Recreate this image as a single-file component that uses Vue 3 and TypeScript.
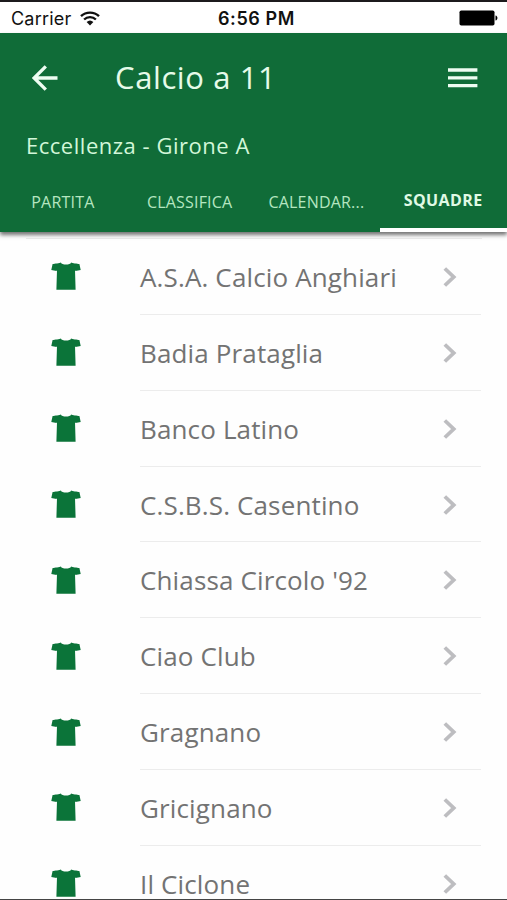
<script setup lang="ts">
interface Tab {
  label: string
  active: boolean
}

const tabs: Tab[] = [
  { label: 'PARTITA', active: false },
  { label: 'CLASSIFICA', active: false },
  { label: 'CALENDAR...', active: false },
  { label: 'SQUADRE', active: true },
]

const teams: string[] = [
  'A.S.A. Calcio Anghiari',
  'Badia Prataglia',
  'Banco Latino',
  'C.S.B.S. Casentino',
  "Chiassa Circolo '92",
  'Ciao Club',
  'Gragnano',
  'Gricignano',
  'Il Ciclone',
]
</script>

<template>
  <div class="screen">
    <div class="status">
      <div class="carrier">
        <span>Carrier</span>
        <svg class="wifi" viewBox="0 0 20 15" width="20" height="15">
          <path d="M1 5.2a13 13 0 0 1 18 0" />
          <path d="M4.1 8.5a8.6 8.6 0 0 1 11.8 0" />
          <path class="dot" d="M6.6 11.1a5 5 0 0 1 6.8 0L10 14.6z" />
        </svg>
      </div>
      <span class="time">6:56 PM</span>
      <svg class="battery" viewBox="0 0 39 16" width="39" height="16">
        <rect x="0.5" y="0.5" width="35" height="15" rx="1.8" />
        <path d="M36.5 5.5c2.6.6 2.6 4.4 0 5z" />
      </svg>
    </div>

    <header class="header">
      <div class="toolbar">
        <svg class="back" viewBox="0 0 26 26" width="26" height="26">
          <path d="M25.5 13H2M13.8 1.3L2.1 13l11.7 11.7" />
        </svg>
        <h1 class="title">Calcio a 11</h1>
        <svg class="menu" viewBox="0 0 30 20" width="30" height="20">
          <path d="M0 2h29.4M0 9.8h29.4M0 17.6h29.4" />
        </svg>
      </div>
      <div class="subtitle">Eccellenza - Girone A</div>
      <nav class="tabs">
        <div v-for="tab in tabs" :key="tab.label" class="tab" :class="{ active: tab.active }">
          <span>{{ tab.label }}</span>
        </div>
      </nav>
    </header>

    <ul class="list">
      <li v-for="team in teams" :key="team" class="row">
        <svg class="shirt" viewBox="0 0 30 28" width="30" height="28">
          <path d="M9.9.4c.6 2.7 9.6 2.7 10.2 0 1.200 1 6.100.8 8.300 1.700L29.700 7.900l-5.300 1-.4-1 .6 19.900H5.400l.6-19.900-.4 1-5.300-1L1.600 2.100C3.800 1.200 8.700 1.400 9.900.4z" />
        </svg>
        <div class="content">
          <span class="name">{{ team }}</span>
          <svg class="chevron" viewBox="0 0 14 20" width="14" height="20">
            <path d="M1.800 1.500l8.900 8.500-8.900 8.500" />
          </svg>
        </div>
      </li>
    </ul>
  </div>
</template>

<style>
body {
  margin: 0;
  background: #fff;
}
</style>

<style scoped>
.screen {
  box-sizing: border-box;
  width: 507px;
  height: 900px;
  overflow: hidden;
  display: flex;
  flex-direction: column;
  background: #fefefe;
  border-top: 2px solid #1c1a1d;
  border-bottom: 1px solid #444;
  font-family: "Open Sans", "Noto Sans", sans-serif;
}

.status {
  flex: none;
  height: 31px;
  display: grid;
  grid-template-columns: 1fr auto 1fr;
  align-items: center;
  padding: 1px 9px 0 11px;
  box-sizing: border-box;
  background: #fff;
  color: #111;
  font-family: Inter, "Liberation Sans", sans-serif;
  font-size: 18px;
}

.carrier {
  display: flex;
  align-items: center;
  gap: 9px;
  letter-spacing: 0.2px;
}

.wifi {
  fill: none;
  stroke: #111;
  stroke-width: 2.4;
}

.wifi .dot {
  fill: #111;
  stroke: none;
}

.time {
  padding-left: 4px;
  font-weight: 600;
  letter-spacing: 0.6px;
}

.battery {
  justify-self: end;
  fill: #000;
}

.header {
  flex: none;
  position: relative;
  height: 199px;
  display: flex;
  flex-direction: column;
  background: #106c38;
  box-shadow: 0 3px 4px rgba(0, 0, 0, 0.55);
  color: #e6fbe9;
}

.toolbar {
  height: 89px;
  display: flex;
  align-items: center;
  padding: 0 29px 0 32px;
}

.back,
.menu {
  fill: none;
  stroke: #eefdf2;
  stroke-width: 3.3;
}

.title {
  flex: 1;
  margin: 0 0 2px 57px;
  font-size: 31px;
  font-weight: 400;
  line-height: 42px;
  letter-spacing: 0.6px;
}

.subtitle {
  height: 46px;
  line-height: 46px;
  padding-left: 26px;
  font-size: 22px;
  letter-spacing: 0.52px;
  color: #d2f7d9;
}

.tabs {
  flex: 1;
  display: grid;
  grid-template-columns: repeat(4, 1fr);
}

.tab {
  display: flex;
  align-items: center;
  justify-content: center;
  padding: 3px 1px 0 0;
  font-size: 16px;
  letter-spacing: 0.2px;
  color: #b5e6c0;
}

.tab.active {
  border-bottom: 4px solid #fff;
  font-weight: 700;
  letter-spacing: 0.4px;
  color: #e0fae5;
}

.list {
  flex: none;
  list-style: none;
  margin: 6px 25px 0 26px;
  padding: 0 1px 0 25px;
  border-top: 1px solid #ececec;
}

.row {
  display: flex;
  align-items: center;
  height: 75.86px;
}

.shirt {
  flex: none;
  margin-bottom: 1px;
  fill: #0b7439;
}

.content {
  flex: 1;
  margin-left: 59px;
  height: 100%;
  box-sizing: border-box;
  display: flex;
  align-items: center;
  justify-content: space-between;
  padding-top: 1px;
  padding-right: 24px;
  border-bottom: 1.5px solid #ececec;
}

.name {
  font-size: 26px;
  letter-spacing: 0.14px;
  white-space: nowrap;
  color: #737373;
}

.chevron {
  fill: none;
  stroke: #bdbdc0;
  stroke-width: 3.8;
}
</style>
